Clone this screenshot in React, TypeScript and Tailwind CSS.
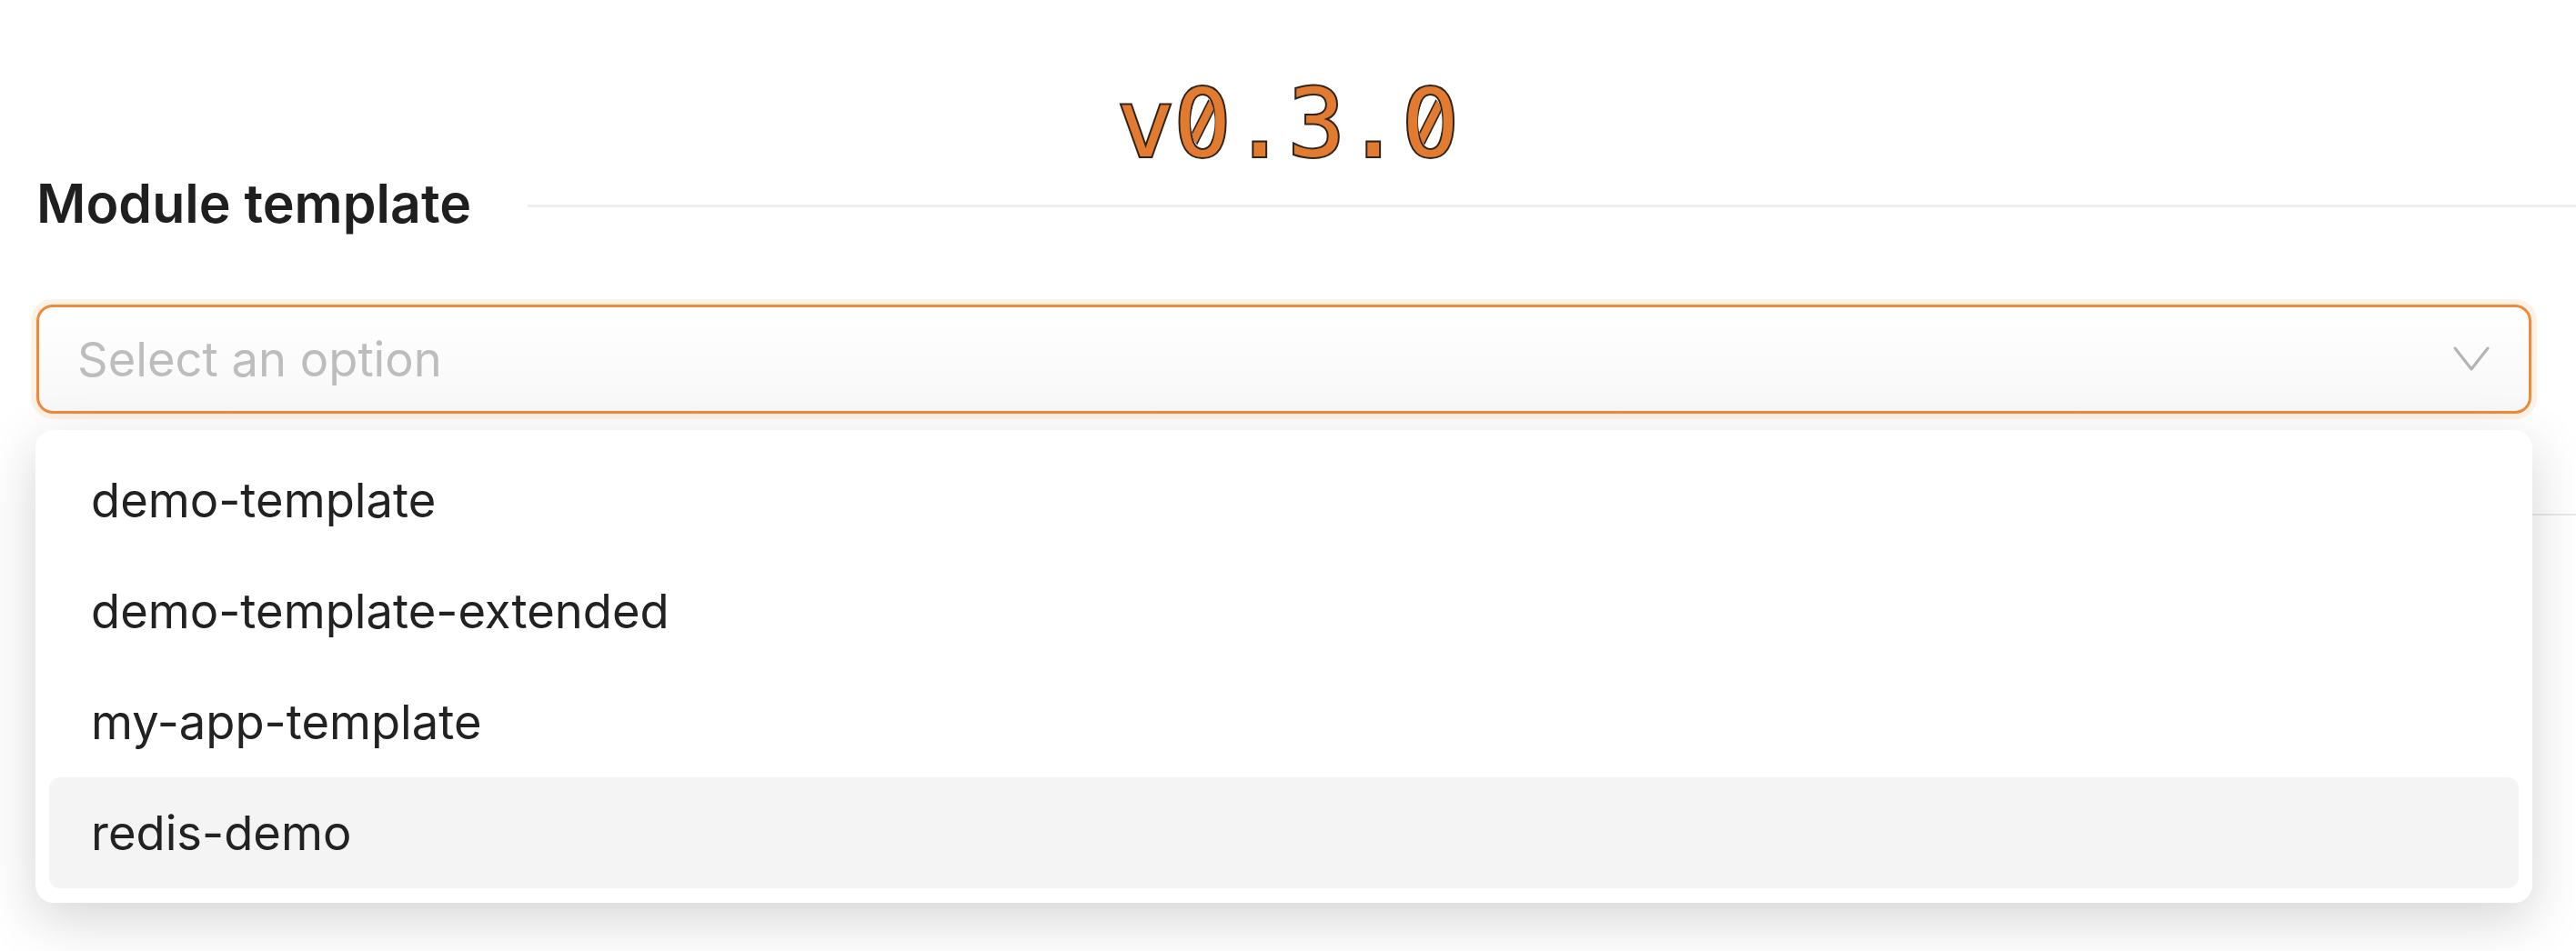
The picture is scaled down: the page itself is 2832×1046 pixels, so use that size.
const templates = ['demo-template', 'demo-template-extended', 'my-app-template', 'redis-demo']

// DejaVu Sans Mono draws a dotted zero; the reference uses a slashed one,
// so a slash is painted over the counter (font units, baseline at y=1733)
function SlashedZero() {
  return (
    <span className="relative inline-block">
      0
      <svg className="absolute left-0 top-0 h-full w-full" viewBox="0 0 1233 2048" preserveAspectRatio="none">
        <defs>
          <clipPath id="zero-counter">
            <ellipse cx="616" cy="988" rx="262" ry="560" />
          </clipPath>
        </defs>
        <g clipPath="url(#zero-counter)">
          <rect x="300" y="380" width="640" height="1220" fill="#ffffff" />
          <line x1="330" y1="1560" x2="910" y2="410" stroke="#2e241c" strokeWidth="230" />
          <line x1="330" y1="1560" x2="910" y2="410" stroke="#e27b2f" strokeWidth="165" />
        </g>
      </svg>
    </span>
  )
}

function Chevron() {
  return (
    <svg width="40" height="28" viewBox="0 0 40 28" fill="none">
      <path d="M2 2 L20 25 L38 2" stroke="#b3b3b3" strokeWidth="3" strokeLinecap="round" strokeLinejoin="round" />
    </svg>
  )
}

function TemplateSelect() {
  const active = 'redis-demo'

  return (
    <div className="relative mr-[49px] mt-[76px]">
      <div className="h-[120px] rounded-[18px] border-[3px] border-[#ef8a3b] bg-gradient-to-b from-white to-[#f8f8f8] shadow-[0_0_0_6px_#fcf2e5] flex items-center justify-between pl-[42px] pr-[43px]">
        <span className="text-[52.5px] text-[#bdbdbd]">Select an option</span>
        <Chevron />
      </div>

      <div className="absolute left-[-1px] right-[-1px] top-[138px] z-10 rounded-[20px] bg-white px-[15px] py-[16px] shadow-[0_18px_60px_rgba(0,0,0,0.17)]">
        {templates.map((t) => (
          <div
            key={t}
            className={
              t === active
                ? 'h-[122px] rounded-[12px] bg-[#f4f4f4] pl-[46px] flex items-center text-[52.5px] text-[#222]'
                : 'h-[122px] rounded-[12px] pl-[46px] flex items-center text-[52.5px] text-[#222]'
            }
          >
            {t}
          </div>
        ))}
      </div>
    </div>
  )
}

export default function App() {
  return (
    <div className="min-h-screen bg-white font-['Inter','Noto_Sans',sans-serif] overflow-hidden">
      <div className="pt-[84px] text-center font-['DejaVu_Sans_Mono',monospace] text-[104px] leading-none h-[188px] text-[#e27b2f] [-webkit-text-stroke:4px_#2e241c] [paint-order:stroke_fill]">
        v<SlashedZero />.3.<SlashedZero />
      </div>

      <div className="pl-[40px] pt-[1px]">
        <div className="flex items-center h-[70px]">
          <h2 className="text-[59px] leading-[70px] font-semibold text-[#1f1f1f]">Module template</h2>
          <div className="ml-[62px] mt-[5px] flex-1 h-[3px] bg-[#efefef]" />
        </div>

        <TemplateSelect />

        <div className="mt-[110px] h-[2px] bg-[#e9e9e9]" />
      </div>
    </div>
  )
}
